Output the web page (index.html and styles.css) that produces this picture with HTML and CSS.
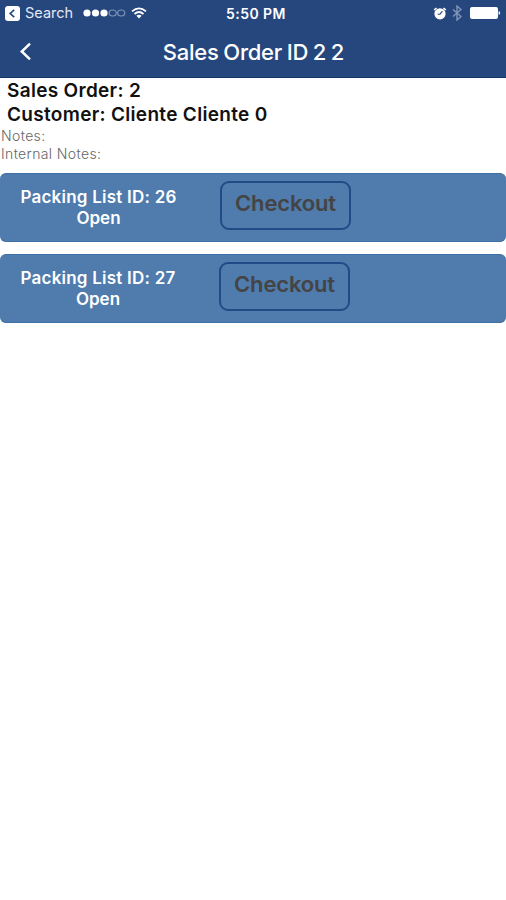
FILE: index.html
```html
<!DOCTYPE html>
<html lang="en">
<head>
<meta charset="utf-8">
<title>Sales Order</title>
<link rel="stylesheet" href="styles.css">
</head>
<body>
<header class="header">
  <div class="status">
    <div class="status-left">
      <svg class="back-app" width="15" height="15" viewBox="0 0 15 15"><rect width="15" height="15" rx="3" fill="#fff"/><path d="M9.2 3.8 5.2 7.5l4 3.7" fill="none" stroke="#26477d" stroke-width="1.7"/></svg>
      <span class="search">Search</span>
      <svg class="signal" width="43" height="8" viewBox="0 0 43 8"><g fill="#fff"><circle cx="4" cy="4" r="3.6"/><circle cx="12.5" cy="4" r="3.6"/><circle cx="21" cy="4" r="3.6"/></g><g fill="none" stroke="#8296bb" stroke-width="1.1"><ellipse cx="29.7" cy="4" rx="3.6" ry="3"/><ellipse cx="38.2" cy="4" rx="3.6" ry="3"/></g></svg>
      <svg class="wifi" width="16" height="12" viewBox="0 0 16 12"><g fill="none" stroke="#fff" stroke-width="1.7"><path d="M1 4.3Q8-1.7 15 4.3"/><path d="M3.5 7Q8 3 12.5 7"/></g><path d="M5.4 8.8Q8 6.6 10.6 8.8L8 11.6Z" fill="#fff"/></svg>
    </div>
    <span class="time">5:50 PM</span>
    <div class="status-right">
      <svg width="14" height="13" viewBox="0 0 14 13"><circle cx="7" cy="6.8" r="5.6" fill="#fff"/><path d="M1.1 3 3.5 1M12.9 3 10.5 1" stroke="#fff" stroke-width="1.6"/><path d="M9.4 4.2 7 7.2H4.7" fill="none" stroke="#26477d" stroke-width="1.1"/></svg>
      <svg class="bluetooth" width="10" height="16" viewBox="0 0 10 16"><path d="m1 4.5 8 7-4 3.5V1l4 3.5-8 7" fill="none" stroke="#8395b8" stroke-width="1.4"/></svg>
      <svg class="battery" width="31" height="12" viewBox="0 0 31 12"><rect width="28" height="12" rx="2" fill="#fff"/><path d="M28.7 4q1.5.5 1.5 2t-1.5 2Z" fill="#fff"/></svg>
    </div>
  </div>
  <nav class="nav">
    <svg class="chevron" width="13" height="19" viewBox="0 0 13 19"><path d="M11 1.7 2.8 9.5l8.2 7.8" fill="none" stroke="#fff" stroke-width="2.5"/></svg>
    <h1 class="title">Sales Order ID 2 2</h1>
  </nav>
</header>
<main>
  <section class="details">
    <h2 class="order">Sales Order: 2</h2>
    <h2 class="customer">Customer: Cliente Cliente 0</h2>
    <p class="notes">Notes:</p>
    <p class="notes internal">Internal Notes:</p>
  </section>
  <section class="packing-lists">
    <article class="card">
      <div class="info"><div class="packing">Packing List ID: 26</div><div class="state">Open</div></div>
      <button class="checkout">Checkout</button>
    </article>
    <article class="card second">
      <div class="info"><div class="packing">Packing List ID: 27</div><div class="state">Open</div></div>
      <button class="checkout">Checkout</button>
    </article>
  </section>
</main>
</body>
</html>
```
FILE: styles.css
```css
* { box-sizing: border-box; }
body { margin: 0; background: #fff; font-family: Inter, sans-serif; color: #111; white-space: nowrap; }
h1, h2, p { margin: 0; }
svg { display: block; flex: none; }
.header { height: 78px; background: #26477d; border-bottom: 1px solid #123869; color: #fff; }
.status { height: 26px; display: grid; grid-template-columns: 1fr auto 1fr; align-items: center; }
.status-left { display: flex; align-items: center; padding-left: 5px; }
.search { width: 48px; margin-left: 5px; font-size: 14.5px; line-height: 26px; color: #e3e9f5; }
.signal { margin-left: 10px; }
.wifi { margin-left: 5px; }
.time { margin-left: 6px; font-size: 14px; font-weight: 600; letter-spacing: .45px; }
.status-right { display: flex; align-items: center; justify-content: flex-end; padding-right: 5px; }
.bluetooth { margin-left: 5px; }
.battery { margin-left: 8px; }
.nav { height: 51px; display: grid; grid-template-columns: 50px 1fr 50px; align-items: center; }
.chevron { margin-left: 19px; }
.title { font-size: 22px; font-weight: 500; line-height: 30px; letter-spacing: -.25px; word-spacing: -.9px; text-align: center; padding-left: 1px; }
.details { height: 95px; padding-top: 1px; }
.order, .customer { padding-left: 7px; height: 24px; font-size: 19px; line-height: 24px; font-weight: 600; letter-spacing: .31px; }
.notes { height: 18px; padding-left: 1px; font-size: 14px; line-height: 17px; font-weight: 300; letter-spacing: .38px; color: #666; }
.packing-lists { display: flex; flex-direction: column; gap: 12px; }
.card { display: flex; height: 69px; padding-top: 7px; background: #4f7bad; border: solid #3d70a5; border-width: 1px 0; border-radius: 6px; }
.info { width: 197px; padding-top: 6px; text-align: center; color: #fff; font-size: 17px; font-weight: 600; line-height: 21px; letter-spacing: .23px; }
.state { letter-spacing: 0; }
.checkout { width: 131px; height: 49px; margin-left: 23px; padding: 0 0 6px; border: 2px solid #204b87; border-radius: 9px; background: transparent; color: #444; font: 600 22px/28px Inter, sans-serif; letter-spacing: -.15px; }
.second .info { width: 196px; }
```
